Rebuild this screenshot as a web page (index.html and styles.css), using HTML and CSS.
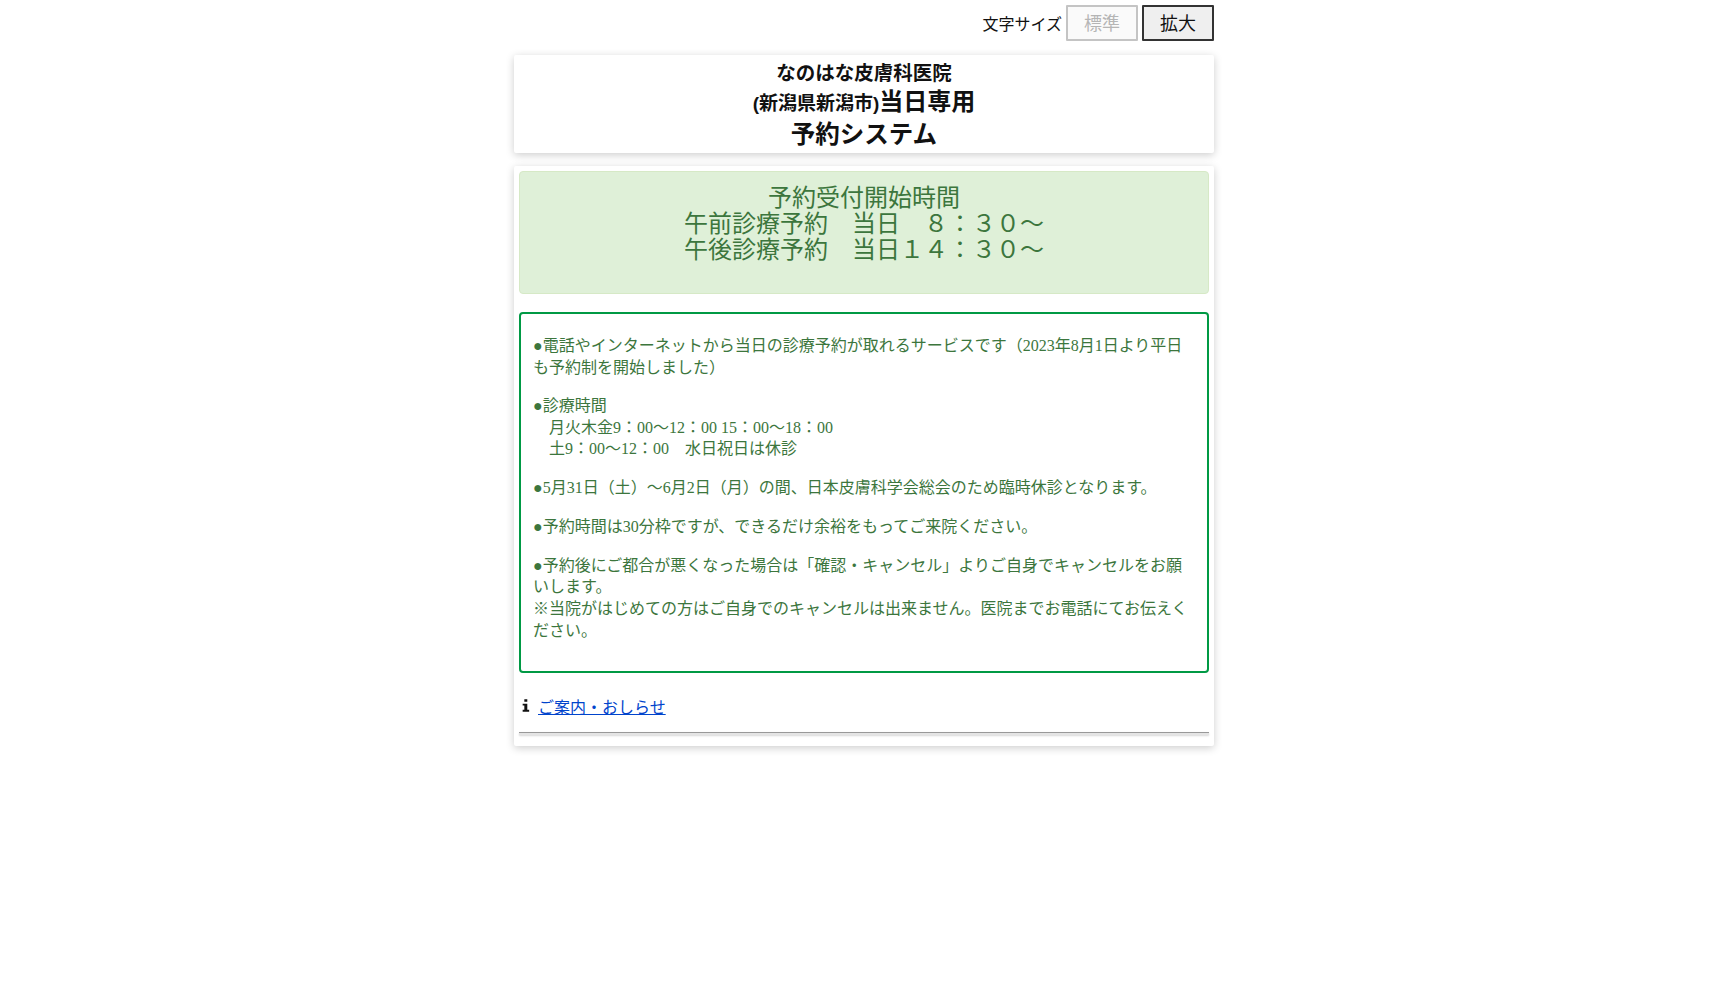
FILE: index.html
```html
<!DOCTYPE html>
<html lang="ja">
<head>
    <meta charset="UTF-8">
    <meta name="viewport" content="width=device-width, initial-scale=1.0">
    <title>なのはな皮膚科医院 当日専用予約システム</title>
    <link rel="stylesheet" href="styles.css">
</head>
<body>
    <div class="wrapper">
        <div class="font-size-bar">
            <span class="font-size-label">文字サイズ</span>
            <button class="size-button size-normal">標準</button>
            <button class="size-button size-large">拡大</button>
        </div>

        <div class="card title-card">
            <div class="title-clinic">なのはな皮膚科医院</div>
            <div class="title-line"><span class="title-area">(新潟県新潟市)</span>当日専用</div>
            <div class="title-line title-system">予約システム</div>
        </div>

        <div class="card main-card">
            <div class="alert-hours">
                予約受付開始時間<br>
                午前診療予約　当日　８：３０～<br>
                午後診療予約　当日１４：３０～
            </div>

            <div class="notice-box">
                <p>●電話やインターネットから当日の診療予約が取れるサービスです（2023年8月1日より平日も予約制を開始しました）</p>
                <p>●診療時間<br>
                　月火木金9：00～12：00 15：00～18：00<br>
                　土9：00～12：00　水日祝日は休診</p>
                <p>●5月31日（土）～6月2日（月）の間、日本皮膚科学会総会のため臨時休診となります。</p>
                <p>●予約時間は30分枠ですが、できるだけ余裕をもってご来院ください。</p>
                <p class="notice-last">●予約後にご都合が悪くなった場合は「確認・キャンセル」よりご自身でキャンセルをお願いします。<br>
                ※当院がはじめての方はご自身でのキャンセルは出来ません。医院までお電話にてお伝えください。</p>
            </div>

            <div class="info-row">
                <svg class="info-icon" viewBox="0 0 8 14" aria-hidden="true">
                    <path d="M2.2 0.3h3.2v2.7h-3.2z M0.4 5h5v6.6h2v2.1H0.4v-2.1h1.8V7.1H0.4z"/>
                </svg>
                <a href="#">ご案内・おしらせ</a>
            </div>
            <hr class="divider">
        </div>
    </div>
</body>
</html>
```

FILE: styles.css
```css
body {
    margin: 0;
    padding: 0;
    background-color: #fff;
    color: #111;
    font-family: "Liberation Serif", "Noto Sans CJK JP", serif;
    font-size: 16px;
}
.wrapper {
    width: 700px;
    margin: 0 auto;
    padding-bottom: 30px;
}
.font-size-bar {
    display: flex;
    justify-content: flex-end;
    align-items: center;
    gap: 4px;
    height: 36px;
    padding-top: 5px;
    margin-bottom: 14px;
}
.font-size-label {
    font-family: "Liberation Sans", "Noto Sans CJK JP", sans-serif;
}
.size-button {
    box-sizing: border-box;
    width: 72px;
    height: 36px;
    padding: 0 0 2px;
    font-family: "Liberation Sans", "Noto Sans CJK JP", sans-serif;
    font-size: 18px;
    border-radius: 1px;
    border: 2px solid #333;
    background-color: #efefef;
    color: #111;
}
.size-normal {
    border-color: #c4c4c4;
    background-color: #fafafa;
    color: #b5b5b5;
}
.card {
    background-color: #fff;
    box-shadow: 0 2px 8px rgba(0,0,0,0.2);
    border-radius: 2px;
}
.title-card {
    box-sizing: border-box;
    height: 98px;
    padding-top: 5px;
    margin-bottom: 13px;
    text-align: center;
    font-family: "Liberation Sans", "Noto Sans CJK JP", sans-serif;
    font-weight: bold;
}
.title-clinic {
    font-size: 19.5px;
    line-height: 26px;
}
.title-line {
    font-size: 24px;
    line-height: 31px;
}
.title-area {
    font-size: 19px;
}
.title-system {
    font-size: 24.5px;
}
.main-card {
    padding: 5px;
    height: 570px;
}
.alert-hours {
    box-sizing: border-box;
    height: 123px;
    padding: 12.5px 15px;
    margin-bottom: 18px;
    background-color: #dff0d8;
    border: 1px solid #d6e9c6;
    border-radius: 4px;
    color: #3c763d;
    font-family: "Liberation Sans", "Noto Sans CJK JP", sans-serif;
    font-size: 24px;
    line-height: 26px;
    text-align: center;
}
.notice-box {
    box-sizing: border-box;
    height: 361px;
    padding: 21px 12px;
    border: 2px solid #009944;
    border-radius: 4px;
    color: #3c763d;
    line-height: 21.5px;
}
.notice-box p {
    margin: 0 0 17.3px;
}
.notice-box .notice-last {
    line-height: 21.8px;
}
.info-row {
    display: flex;
    align-items: center;
    gap: 8px;
    height: 21px;
    margin: 22px 0 0 3px;
}
.info-icon {
    width: 8px;
    height: 13px;
    fill: #111;
}
.info-row a {
    color: #0044cc;
}
.divider {
    box-sizing: border-box;
    height: 3px;
    margin: 16px 0 0;
    border: none;
    border-top: 1px solid #999;
    background-color: #e4e4e4;
    box-shadow: 0 1px 2px rgba(0,0,0,0.15);
}
```
